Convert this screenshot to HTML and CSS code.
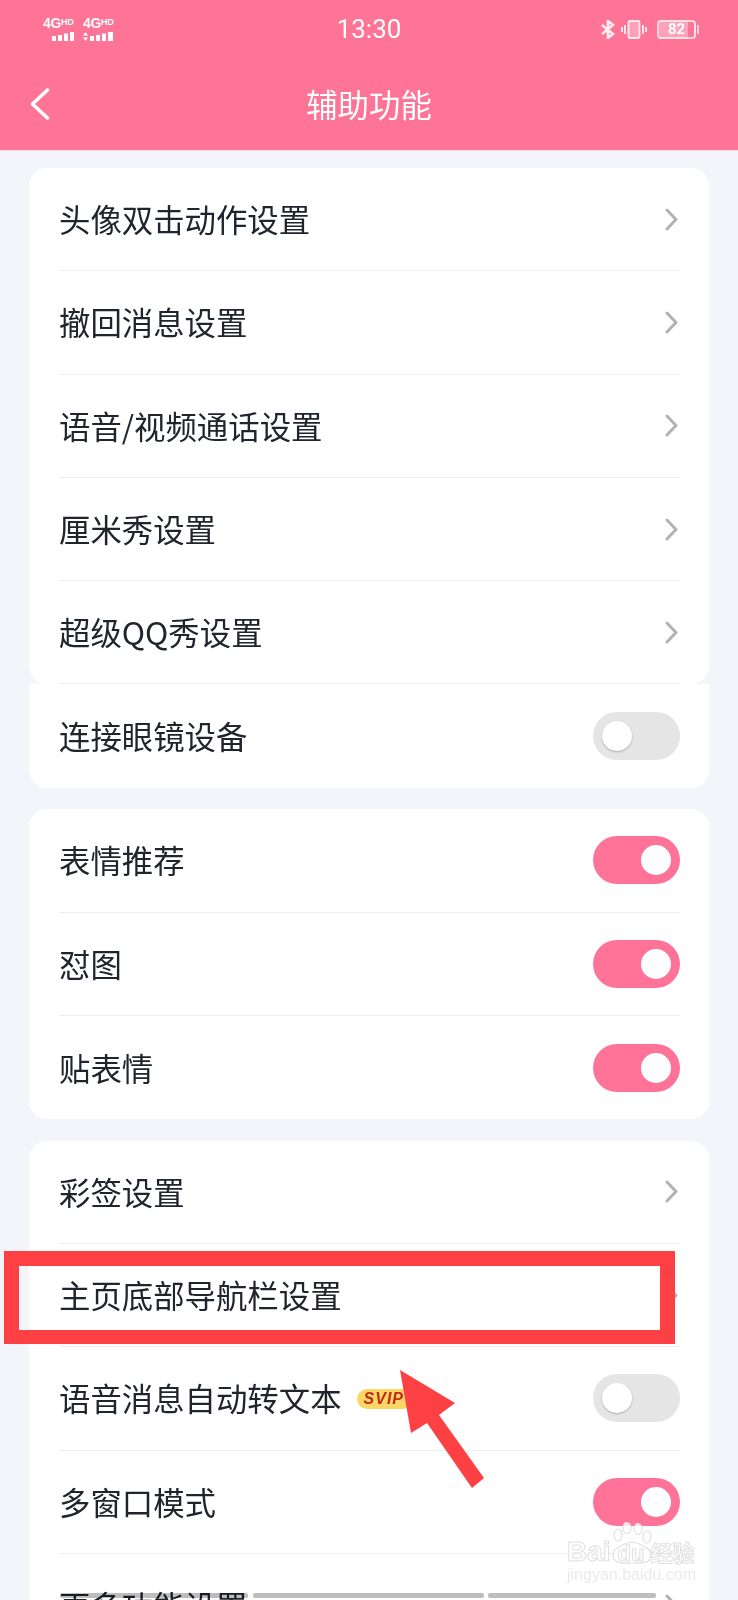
FILE: index.html
```html
<!DOCTYPE html>
<html lang="zh-CN">
<head>
  <meta charset="UTF-8">
  <meta name="viewport" content="width=device-width, initial-scale=1.0">
  <title>辅助功能</title>
  <link rel="stylesheet" href="styles.css">
</head>
<body>
  <div class="page">
    <header class="header">
      <div class="status">
        <div class="signals">
          <div class="signal">
            <span class="net">4G<sup>HD</sup></span>
            <svg class="bars" width="31" height="9" viewBox="0 0 31 9"><rect x="9" y="4" width="4" height="5"/><rect x="15" y="3" width="4" height="6"/><rect x="21" y="1.500" width="4" height="7.500"/><rect x="27" y="0" width="4" height="9"/></svg>
          </div>
          <div class="signal">
            <span class="net">4G<sup>HD</sup></span>
            <svg class="bars" width="31" height="9" viewBox="0 0 31 9"><path d="M0 3.500 2.500 0 5 3.500zM0 5.500 2.500 9 5 5.500z"/><rect x="7" y="4" width="4" height="5"/><rect x="13" y="3" width="4" height="6"/><rect x="19" y="1.500" width="4" height="7.500"/><rect x="25" y="0" width="5" height="9"/></svg>
          </div>
        </div>
        <div class="time">13:30</div>
        <div class="status-right">
          <svg width="14" height="19" viewBox="0 0 14 19" fill="none" stroke="#ffffffe0" stroke-width="2.600"><path d="M1 5 12 14 7 18V1L12 5 1 14"/></svg>
          <svg width="26" height="19" viewBox="0 0 26 19" fill="none" stroke="#ffffffd0"><rect x="7.500" y="1" width="11" height="17" rx="1.500" fill="#ffffff55" stroke-width="1.800"/><path d="M4 5V14M1 7V12M22 5V14M25 7V12" stroke-width="2"/></svg>
          <div class="battery"><span class="battery-level">82</span></div>
        </div>
      </div>
      <div class="nav">
        <svg class="back" width="20" height="32" viewBox="0 0 20 32" fill="none" stroke="#fff" stroke-width="3.600" stroke-linecap="round" stroke-linejoin="round"><path d="M17.500 2 2.500 16 17.500 30"/></svg>
        <h1>辅助功能</h1>
        <span></span>
      </div>
    </header>

    <main class="content">
      <div class="group">
        <section class="card card-top">
          <div class="row"><span>头像双击动作设置</span><svg class="chevron" width="13" height="23" viewBox="0 0 13 23"><path d="M2 2 11 11.500 2 21"/></svg></div>
          <div class="row"><span>撤回消息设置</span><svg class="chevron" width="13" height="23" viewBox="0 0 13 23"><path d="M2 2 11 11.500 2 21"/></svg></div>
          <div class="row"><span>语音/视频通话设置</span><svg class="chevron" width="13" height="23" viewBox="0 0 13 23"><path d="M2 2 11 11.500 2 21"/></svg></div>
          <div class="row"><span>厘米秀设置</span><svg class="chevron" width="13" height="23" viewBox="0 0 13 23"><path d="M2 2 11 11.500 2 21"/></svg></div>
          <div class="row"><span>超级QQ秀设置</span><svg class="chevron" width="13" height="23" viewBox="0 0 13 23"><path d="M2 2 11 11.500 2 21"/></svg></div>
        </section>
        <section class="card card-bottom">
          <div class="row"><span>连接眼镜设备</span><div class="toggle"></div></div>
        </section>
      </div>

      <section class="card">
        <div class="row"><span>表情推荐</span><div class="toggle on"></div></div>
        <div class="row"><span>怼图</span><div class="toggle on"></div></div>
        <div class="row"><span>贴表情</span><div class="toggle on"></div></div>
      </section>

      <section class="card">
        <div class="row"><span>彩签设置</span><svg class="chevron" width="13" height="23" viewBox="0 0 13 23"><path d="M2 2 11 11.500 2 21"/></svg></div>
        <div class="row"><span>主页底部导航栏设置</span><svg class="chevron" width="13" height="23" viewBox="0 0 13 23"><path d="M2 2 11 11.500 2 21"/></svg></div>
        <div class="row">
          <div class="label-wrap"><span>语音消息自动转文本</span><span class="svip">SVIP</span></div>
          <div class="toggle"></div>
        </div>
        <div class="row"><span>多窗口模式</span><div class="toggle on"></div></div>
        <div class="row"><span>更多功能设置</span><svg class="chevron" width="13" height="23" viewBox="0 0 13 23"><path d="M2 2 11 11.500 2 21"/></svg></div>
      </section>
    </main>

    <!-- annotation drawn over the screenshot -->
    <div class="red-box"></div>
    <svg class="arrow" width="100" height="130" viewBox="0 0 100 130"><path d="M15 0 70 33 54 45 99 108 87 118 42 53 26 63z" fill="#fd4044"/></svg>

    <!-- scroll bar remains at the bottom edge -->
    <div class="edge-bar bar-a"></div>
    <div class="edge-bar bar-b"></div>
    <div class="edge-bar bar-c"></div>

    <div class="watermark">
      <svg class="paw" width="44" height="44" viewBox="0 0 44 44" fill="#ffffffcc" stroke="#e0e0e0" stroke-width="1.200"><ellipse cx="7" cy="13" rx="4" ry="6"/><ellipse cx="16" cy="6" rx="4" ry="5.500"/><ellipse cx="27" cy="7" rx="4" ry="5.500"/><ellipse cx="36" cy="15" rx="4" ry="6"/><path d="M21 20C15 20 13 23 8 25 2 28 1 33 3 37 6 42 14 41 21 41 28 41 36 42 39 37 41 33 40 28 34 25 29 23 27 20 21 20z"/></svg>
      <div class="wm-main"><span>Bai</span><span class="wm-du">du</span><span class="wm-cn">经验</span></div>
      <div class="wm-url">jingyan.baidu.com</div>
    </div>
  </div>
</body>
</html>
```

FILE: styles.css
```css
* {
  box-sizing: border-box;
}

body {
  margin: 0;
  font-family: "Noto Sans CJK SC", "Noto Sans", sans-serif;
  background-color: #f3f5fa;
}

.page {
  position: relative;
  width: 738px;
  height: 1600px;
  overflow: hidden;
  background-color: #f3f5fa;
}

.header {
  height: 151px;
  background-color: #fe7497;
  color: #fff;
  border-bottom: 1px solid #ebdfe3;
}

.status {
  display: grid;
  grid-template-columns: 1fr auto 1fr;
  align-items: center;
  height: 58px;
  padding: 0 40px 0 43px;
}

.signals {
  display: flex;
  gap: 9px;
}

.signal {
  display: flex;
  flex-direction: column;
  width: 31px;
}

.net {
  font-family: "Liberation Sans", sans-serif;
  font-size: 14px;
  font-weight: 700;
  letter-spacing: -0.3px;
  line-height: 13px;
  white-space: nowrap;
}

.net sup {
  font-size: 9px;
  line-height: 8px;
  vertical-align: 3px;
}

.bars {
  display: block;
  margin-top: 2px;
  fill: #fff;
}

.time {
  margin-right: 3px;
  font-family: Roboto, sans-serif;
  font-size: 26px;
  line-height: 30px;
}

.status-right {
  display: flex;
  align-items: center;
  justify-content: flex-end;
  gap: 6px;
}

.battery {
  position: relative;
  width: 39px;
  height: 19px;
  margin: 0 2px 0 4px;
  border: 2px solid #ffffffb0;
  border-radius: 4px;
  background: linear-gradient(to right, #ffffff55 82%, transparent 82%);
  text-align: center;
}

.battery:after {
  content: "";
  position: absolute;
  top: 3px;
  right: -5px;
  width: 2px;
  height: 9px;
  background-color: #ffffffb0;
}

.battery-level {
  display: block;
  font-family: Roboto, sans-serif;
  font-size: 15px;
  font-weight: 700;
  line-height: 15px;
}

.nav {
  display: grid;
  grid-template-columns: 1fr auto 1fr;
  align-items: center;
  height: 91px;
  padding: 0 30px;
}

.nav h1 {
  margin: 0;
  font-size: 31.400px;
  font-weight: 400;
  line-height: 44px;
}

.back {
  display: block;
}

.content {
  display: flex;
  flex-direction: column;
  gap: 21.500px;
  padding: 17px 29.500px 0 29px;
}

.card {
  background-color: #fff;
  border-radius: 18px;
}

.card-top {
  position: relative;
}

.card-top .row:last-child {
  border-bottom: 1px solid #eeeeee;
}

.card-bottom {
  border-radius: 0 0 18px 18px;
}

.row {
  display: flex;
  align-items: center;
  justify-content: space-between;
  height: 103.300px;
  margin: 0 29px 0 30px;
  border-bottom: 1px solid #eeeeee;
  font-size: 31.400px;
  color: #20242c;
  white-space: nowrap;
}

.row:last-child {
  border-bottom: none;
}

.row span {
  margin-bottom: 1px;
}

.chevron {
  display: block;
  margin-right: 2px;
  fill: none;
  stroke: #b0b2b7;
  stroke-width: 3;
  stroke-linecap: round;
  stroke-linejoin: round;
}

.toggle {
  position: relative;
  width: 87px;
  height: 48px;
  border-radius: 24px;
  background-color: #e5e5e5;
}

.toggle:after {
  content: "";
  position: absolute;
  top: 9px;
  left: 9px;
  width: 30px;
  height: 30px;
  border-radius: 50%;
  background-color: #fff;
  box-shadow: 0 1px 2px rgba(0, 0, 0, 0.25);
}

.toggle.on {
  background-color: #fe7397;
}

.toggle.on:after {
  left: 48px;
  box-shadow: none;
}

.label-wrap {
  display: flex;
  align-items: center;
  gap: 15px;
}

.row .svip {
  width: 56px;
  height: 20px;
  margin: 2px 0 0;
  padding-left: 7px;
  border-radius: 10px;
  background-color: #fbd765;
  color: #c2281c;
  font-family: "Liberation Sans", sans-serif;
  font-size: 16px;
  font-style: italic;
  font-weight: 700;
  letter-spacing: 1px;
  line-height: 20px;
}

.red-box {
  position: absolute;
  top: 1251px;
  left: 4px;
  width: 671px;
  height: 93px;
  border: solid #fd4044;
  border-width: 15px 15px 14px;
}

.arrow {
  position: absolute;
  top: 1370px;
  left: 385px;
}

.edge-bar {
  position: absolute;
  top: 1593px;
  height: 5px;
  border-radius: 2px;
  background-color: #bdbdbd;
  mix-blend-mode: multiply;
}

.bar-a {
  left: 60px;
  width: 188px;
}

.bar-b {
  left: 253px;
  width: 231px;
}

.bar-c {
  left: 488px;
  width: 168px;
}

.watermark {
  position: absolute;
  top: 1512px;
  left: 567px;
  width: 134px;
  color: #fff;
}

.paw {
  position: absolute;
  top: 10px;
  left: 44px;
}

.wm-main {
  position: relative;
  display: flex;
  align-items: baseline;
  height: 54px;
  padding-top: 24px;
  font-family: "Liberation Sans", sans-serif;
  font-size: 28px;
  font-weight: 700;
  line-height: 30px;
  -webkit-text-stroke: 1px #e0e0e0;
}

.wm-du {
  margin-left: 7px;
  font-size: 22px;
  line-height: 22px;
}

.wm-cn {
  margin-left: 6px;
  font-family: "Noto Sans CJK SC", sans-serif;
  font-size: 22px;
  line-height: 30px;
}

.wm-url {
  position: relative;
  font-family: "Liberation Sans", sans-serif;
  font-size: 16px;
  line-height: 18px;
  white-space: nowrap;
  color: #ebebeb;
}
```
